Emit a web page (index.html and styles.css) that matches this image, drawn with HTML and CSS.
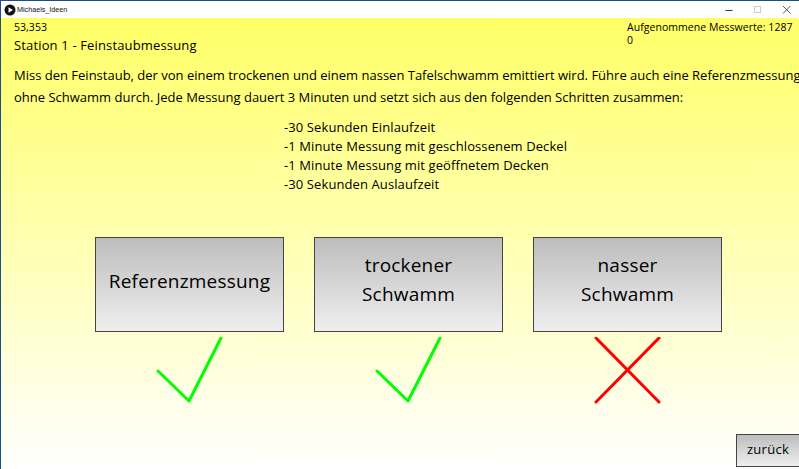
FILE: index.html
```html
<!DOCTYPE html>
<html lang="de">
<head>
<meta charset="utf-8">
<title>Michaels_Ideen</title>
<link rel="stylesheet" href="styles.css">
</head>
<body>
<div class="window">
  <header class="titlebar">
    <svg class="app-icon" width="12" height="12" viewBox="0 0 12 12"><circle cx="6" cy="6" r="5.5" fill="#111"/><path d="M4.5 3.2 9 6 4.5 8.8Z" fill="#fff"/></svg>
    <span class="title">Michaels_Ideen</span>
    <div class="controls">
      <svg width="10" height="10" viewBox="0 0 10 10"><path d="M1.5 5.5H8.5" stroke="#333"/></svg>
      <svg width="10" height="10" viewBox="0 0 10 10"><rect x="1.5" y="1.5" width="6" height="6" fill="none" stroke="#ccc"/></svg>
      <svg width="10" height="10" viewBox="0 0 10 10"><path d="M1 1 8.5 8.5M8.5 1 1 8.5" stroke="#555"/></svg>
    </div>
  </header>
  <main class="sketch">
    <div class="top">
      <div class="top-left">
        <div class="small">53,353</div>
        <h1 class="heading">Station 1 - Feinstaubmessung</h1>
      </div>
      <div class="small counter">Aufgenommene Messwerte: 1287<br>0</div>
    </div>
    <p class="intro">Miss den Feinstaub, der von einem trockenen und einem nassen Tafelschwamm emittiert wird. Führe auch eine Referenzmessung<br>ohne Schwamm durch. Jede Messung dauert 3 Minuten und setzt sich aus den folgenden Schritten zusammen:</p>
    <ul class="steps">
      <li>-30 Sekunden Einlaufzeit</li>
      <li>-1 Minute Messung mit geschlossenem Deckel</li>
      <li>-1 Minute Messung mit geöffnetem Decken</li>
      <li>-30 Sekunden Auslaufzeit</li>
    </ul>
    <div class="options">
      <div class="option">
        <button class="btn big">Referenzmessung</button>
        <svg class="mark" width="70" height="70" viewBox="0 0 70 70"><path d="M3 34 34 64 66 1" fill="none" stroke="#0f0" stroke-width="3" stroke-linecap="round" stroke-linejoin="round"/></svg>
      </div>
      <div class="option">
        <button class="btn big two">trockener<br>Schwamm</button>
        <svg class="mark" width="70" height="70" viewBox="0 0 70 70"><path d="M3 34 34 64 66 1" fill="none" stroke="#0f0" stroke-width="3" stroke-linecap="round" stroke-linejoin="round"/></svg>
      </div>
      <div class="option">
        <button class="btn big two">nasser<br>Schwamm</button>
        <svg class="mark" width="70" height="70" viewBox="0 0 70 70"><path d="M3 1 66 65M66 1 3 65" fill="none" stroke="#f00" stroke-width="3" stroke-linecap="round"/></svg>
      </div>
    </div>
    <div class="footer"><button class="btn back">zurück</button></div>
  </main>
</div>
</body>
</html>
```
FILE: styles.css
```css
* { box-sizing: border-box; }
html, body { margin: 0; height: 100%; overflow: hidden; }
body { font-family: "Open Sans", sans-serif; color: #000; }
.window { width: 799px; height: 469px; display: flex; flex-direction: column; border-top: 1px solid #1a4f8a; border-left: 1px solid #1a4f8a; }
.titlebar { height: 17px; background: #fff; display: flex; align-items: center; padding-left: 3px; flex: none; }
.title { font: 7.2px "Liberation Sans", sans-serif; margin-left: 1px; color: #111; }
.controls { margin-left: auto; display: flex; gap: 19px; padding-right: 7px; align-items: center; }
.sketch { flex: 1; display: flex; flex-direction: column; padding-left: 13px; background: linear-gradient(#ffff66, #fff); min-height: 0; }
.top { display: flex; justify-content: space-between; padding-right: 9px; }
.small { font-size: 10.5px; line-height: 13px; padding-top: 3px; letter-spacing: .05px; }
.counter { width: 163px; white-space: nowrap; }
.heading { font-size: 13px; font-weight: normal; line-height: 16px; margin: 3px 0 0; letter-spacing: .15px; }
.intro { font-size: 13px; line-height: 22px; margin: 11px 0 0; white-space: nowrap; }
.steps { list-style: none; font-size: 13px; line-height: 19px; margin: 10px 0 0 270px; padding: 0; letter-spacing: .1px; }
.options { display: flex; gap: 30px; margin: 43px 0 0 81px; }
.option { display: flex; flex-direction: column; align-items: center; width: 189px; }
.btn { background: linear-gradient(#bdbdbd, #efefef); border: 1px solid #444; font-family: "Open Sans", sans-serif; color: #000; padding: 0; }
.big { width: 189px; height: 95px; font-size: 19px; line-height: 29px; letter-spacing: .2px; padding-bottom: 6px; }
.two { padding-bottom: 10px; }
.mark { margin-top: 5px; }
.footer { margin-top: auto; display: flex; justify-content: flex-end; padding-bottom: 2px; }
.back { width: 63px; height: 33px; font-size: 13px; border-right: 0; letter-spacing: .3px; padding-bottom: 3px; }
```
